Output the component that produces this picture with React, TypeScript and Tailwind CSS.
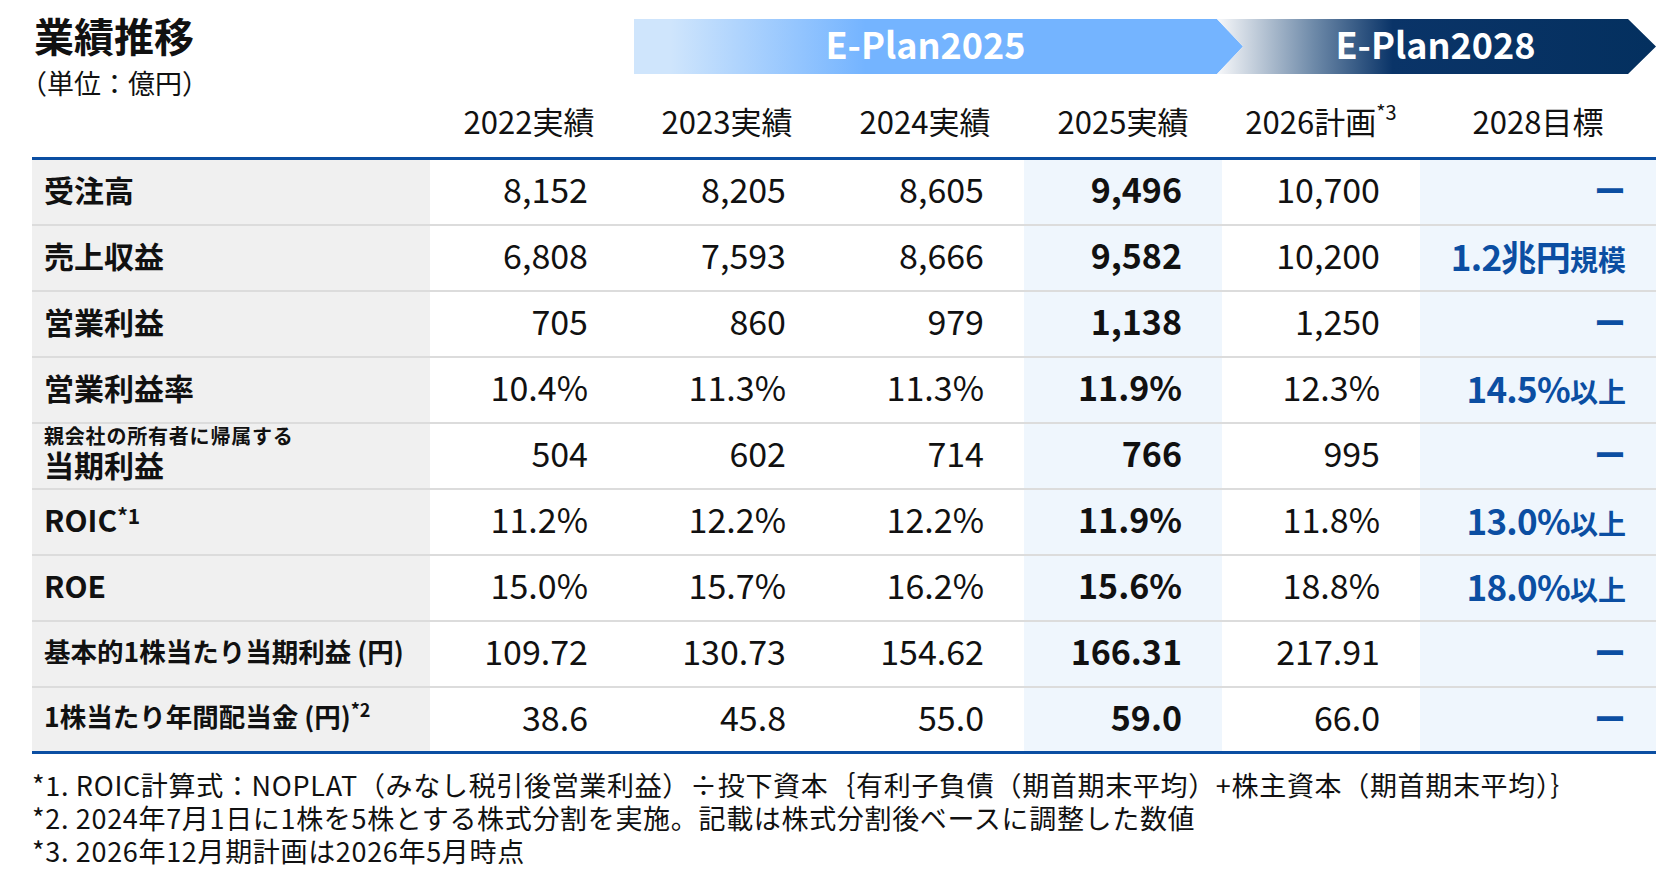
import React from 'react';

type Row = {
  label: React.ReactNode;
  values: string[];
  target: React.ReactNode;
};

const Dash = () => <span className="text-[32px] font-bold leading-none">ー</span>;

const Target: React.FC<{ main: string; unit: string }> = ({ main, unit }) => (
  <span className="whitespace-nowrap">
    <span className="text-[35px] tracking-[-0.02em]">{main}</span>
    <span className="text-[28px]">{unit}</span>
  </span>
);

const rows: Row[] = [
  { label: <span className="text-[30px]">受注高</span>, values: ['8,152', '8,205', '8,605', '9,496', '10,700'], target: <Dash /> },
  { label: <span className="text-[30px]">売上収益</span>, values: ['6,808', '7,593', '8,666', '9,582', '10,200'], target: <Target main="1.2兆円" unit="規模" /> },
  { label: <span className="text-[30px]">営業利益</span>, values: ['705', '860', '979', '1,138', '1,250'], target: <Dash /> },
  { label: <span className="text-[30px]">営業利益率</span>, values: ['10.4%', '11.3%', '11.3%', '11.9%', '12.3%'], target: <Target main="14.5%" unit="以上" /> },
  {
    label: (
      <span className="flex flex-col -mt-[4px]">
        <span className="text-[20px] leading-[25px] tracking-[0.04em]">親会社の所有者に帰属する</span>
        <span className="text-[30px] leading-[32px]">当期利益</span>
      </span>
    ),
    values: ['504', '602', '714', '766', '995'],
    target: <Dash />,
  },
  {
    label: (
      <span className="text-[30px]">
        ROIC<sup className="text-[21px] top-[-0.4em]">*1</sup>
      </span>
    ),
    values: ['11.2%', '12.2%', '12.2%', '11.9%', '11.8%'],
    target: <Target main="13.0%" unit="以上" />,
  },
  { label: <span className="text-[30px]">ROE</span>, values: ['15.0%', '15.7%', '16.2%', '15.6%', '18.8%'], target: <Target main="18.0%" unit="以上" /> },
  { label: <span className="text-[26.5px]">基本的1株当たり当期利益 (円)</span>, values: ['109.72', '130.73', '154.62', '166.31', '217.91'], target: <Dash /> },
  {
    label: (
      <span className="text-[26.5px]">
        1株当たり年間配当金 (円)<sup className="text-[18px] top-[-0.55em]">*2</sup>
      </span>
    ),
    values: ['38.6', '45.8', '55.0', '59.0', '66.0'],
    target: <Dash />,
  },
];

const headers = ['2022実績', '2023実績', '2024実績', '2025実績'];

export default function App() {
  return (
    <div className="w-[1656px] h-[889px] bg-white pl-[32px] text-[#111] font-['Noto_Sans_CJK_JP',sans-serif] overflow-hidden">
      {/* title + plan banner + column headers */}
      <div className="flex h-[157px]">
        <div className="w-[398px] shrink-0 pt-[10px] pl-[2px]">
          <div className="text-[40px] font-bold leading-[50px]">業績推移</div>
          <div className="text-[27px] leading-[34px] mt-[6px] -ml-[14px]">（単位：億円）</div>
        </div>
        <div className="flex-1 flex flex-col">
          <div className="flex h-[55px] mt-[19px] ml-[204px]">
            <div className="w-[609px] h-full flex items-center justify-center pr-[26px] pb-[7px] bg-[linear-gradient(90deg,#cfe5fc_0%,#cfe5fc_6%,#74b4ff_38%,#74b4ff_100%)] [clip-path:polygon(0_0,calc(100%-26px)_0,100%_50%,calc(100%-26px)_100%,0_100%)]">
              <span className="text-white text-[36px] font-bold leading-none">E-Plan2025</span>
            </div>
            <div className="w-[439px] -ml-[26px] h-full flex items-center justify-center pl-[26px] pr-[28px] pb-[7px] bg-[linear-gradient(90deg,#f7f8fa_0%,#6e8aa9_22%,#0a3468_40%,#04305f_100%)] [clip-path:polygon(0_0,calc(100%-28px)_0,100%_50%,calc(100%-28px)_100%,0_100%,26px_50%)]">
              <span className="text-white text-[36px] font-bold leading-none">E-Plan2028</span>
            </div>
          </div>
          <div className="grid grid-cols-[198px_198px_198px_198px_198px_236px] flex-1 items-center pt-[10px] text-[31px] leading-none">
            {headers.map((h) => (
              <div key={h} className="text-center">{h}</div>
            ))}
            <div className="text-center">
              2026計画<sup className="text-[20px] top-[-0.7em]">*3</sup>
            </div>
            <div className="text-center">2028目標</div>
          </div>
        </div>
      </div>

      {/* table */}
      <div className="border-t-[3px] border-b-[3px] border-[#0b4ea2]">
        {rows.map((row, i) => (
          <div
            key={i}
            className="grid grid-cols-[398px_198px_198px_198px_198px_198px_236px] h-[66px] border-b-2 border-[#dcdcdc] last:border-b-0 last:h-[63px]"
          >
            <div className="bg-[#f0f0f0] pl-[12px] pb-[6px] flex items-center font-bold leading-none whitespace-nowrap">
              {row.label}
            </div>
            {row.values.map((v, j) => (
              <div
                key={j}
                className={`flex items-center justify-end pr-[40px] pb-[6px] text-[34px] leading-none ${
                  j === 3 ? 'bg-[#eff6fd] font-bold' : ''
                }`}
              >
                {v}
              </div>
            ))}
            <div className="bg-[#eff6fd] flex items-center justify-end pr-[30px] pb-[6px] text-[#0b4ea2] font-bold leading-none">
              {row.target}
            </div>
          </div>
        ))}
      </div>

      {/* notes */}
      <div className="mt-[14px] text-[27px] leading-[33px] tracking-[0.025em] whitespace-nowrap">
        <p>*1. ROIC計算式：NOPLAT（みなし税引後営業利益）÷投下資本｛有利子負債（期首期末平均）+株主資本（期首期末平均）｝</p>
        <p>*2. 2024年7月1日に1株を5株とする株式分割を実施。記載は株式分割後ベースに調整した数値</p>
        <p>*3. 2026年12月期計画は2026年5月時点</p>
      </div>
    </div>
  );
}
